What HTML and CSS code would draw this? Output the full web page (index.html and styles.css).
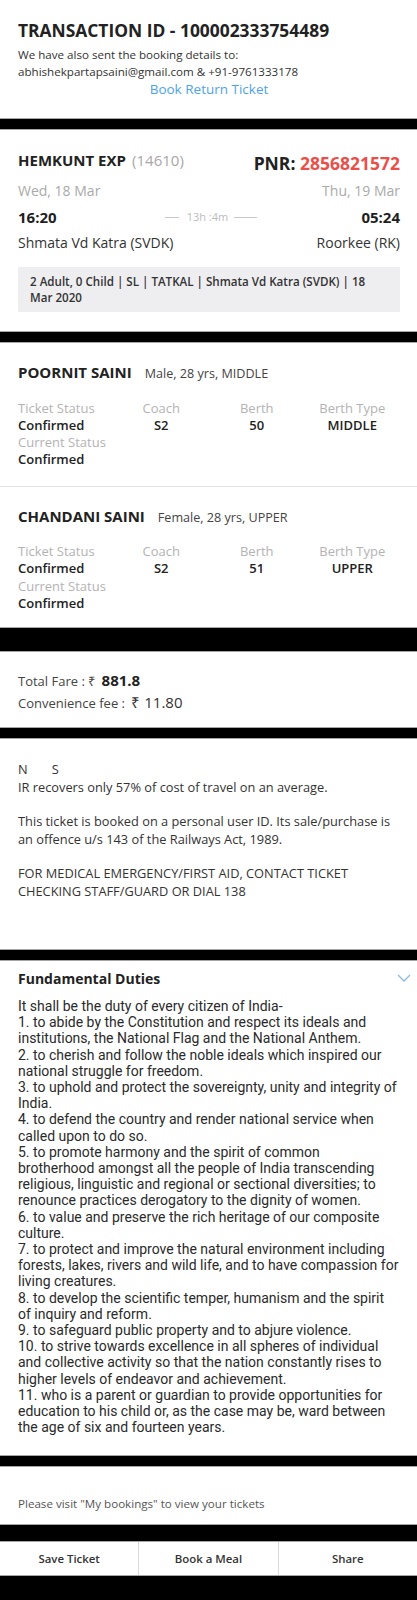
FILE: index.html
```html
<!DOCTYPE html>
<html>
<head>
<meta charset="utf-8">
<link rel="stylesheet" href="styles.css">
</head>
<body>
<div class="page">
  <section class="card head">
    <h1 class="txn">TRANSACTION ID - 100002333754489</h1>
    <p class="sent">We have also sent the booking details to:<br>abhishekpartapsaini@gmail.com &amp; +91-9761333178</p>
    <div class="return"><a class="return-link">Book Return Ticket</a></div>
  </section>

  <section class="card journey">
    <div class="row top">
      <div class="train"><span class="tname">HEMKUNT EXP</span> <span class="tno">(14610)</span></div>
      <div class="pnr">PNR: <span class="pnr-no">2856821572</span></div>
    </div>
    <div class="row dates">
      <span>Wed, 18 Mar</span>
      <span>Thu, 19 Mar</span>
    </div>
    <div class="row times">
      <span class="time">16:20</span>
      <span class="dur"><i class="dash"></i><span class="durt">13h :4m</span><i class="dash"></i></span>
      <span class="time">05:24</span>
    </div>
    <div class="row stations">
      <span>Shmata Vd Katra (SVDK)</span>
      <span>Roorkee (RK)</span>
    </div>
    <div class="summary">2 Adult, 0 Child | SL | TATKAL | Shmata Vd Katra (SVDK) | 18 Mar 2020</div>
  </section>

  <section class="card passengers">
    <div class="pax">
      <div class="pax-name"><b>POORNIT SAINI</b><span class="pax-info">Male, 28 yrs, MIDDLE</span></div>
      <div class="pax-grid">
        <div class="col first"><span class="lbl">Ticket Status</span><span class="val">Confirmed</span><span class="lbl">Current Status</span><span class="val">Confirmed</span></div>
        <div class="col"><span class="lbl">Coach</span><span class="val">S2</span></div>
        <div class="col"><span class="lbl">Berth</span><span class="val">50</span></div>
        <div class="col"><span class="lbl">Berth Type</span><span class="val">MIDDLE</span></div>
      </div>
    </div>
    <div class="pax">
      <div class="pax-name"><b>CHANDANI SAINI</b><span class="pax-info">Female, 28 yrs, UPPER</span></div>
      <div class="pax-grid">
        <div class="col first"><span class="lbl">Ticket Status</span><span class="val">Confirmed</span><span class="lbl">Current Status</span><span class="val">Confirmed</span></div>
        <div class="col"><span class="lbl">Coach</span><span class="val">S2</span></div>
        <div class="col"><span class="lbl">Berth</span><span class="val">51</span></div>
        <div class="col"><span class="lbl">Berth Type</span><span class="val">UPPER</span></div>
      </div>
    </div>
  </section>

  <section class="card fare">
    <div class="fare-line">Total Fare : ₹ <b class="amt">881.8</b></div>
    <div class="fare-line">Convenience fee : <span class="amt2">₹ 11.80</span></div>
  </section>

  <section class="card notes">
    <div class="ns"><span>N</span><span>S</span></div>
    <p>IR recovers only 57% of cost of travel on an average.</p>
    <p>This ticket is booked on a personal user ID. Its sale/purchase is an offence u/s 143 of the Railways Act, 1989.</p>
    <p>FOR MEDICAL EMERGENCY/FIRST AID, CONTACT TICKET CHECKING STAFF/GUARD OR DIAL 138</p>
  </section>

  <section class="card duties">
    <div class="duties-head">
      <h2>Fundamental Duties</h2>
      <svg class="chev" width="14" height="8" viewBox="0 0 14 8"><path d="M1 1 L7 7 L13 1" fill="none" stroke="#8fbbe3" stroke-width="1.4"/></svg>
    </div>
    <p class="duty-text">It shall be the duty of every citizen of India-<br>1. to abide by the Constitution and respect its ideals and<br>institutions, the National Flag and the National Anthem.<br>2. to cherish and follow the noble ideals which inspired our<br>national struggle for freedom.<br>3. to uphold and protect the sovereignty, unity and integrity of<br>India.<br>4. to defend the country and render national service when<br>called upon to do so.<br>5. to promote harmony and the spirit of common<br>brotherhood amongst all the people of India transcending<br>religious, linguistic and regional or sectional diversities; to<br>renounce practices derogatory to the dignity of women.<br>6. to value and preserve the rich heritage of our composite<br>culture.<br>7. to protect and improve the natural environment including<br>forests, lakes, rivers and wild life, and to have compassion for<br>living creatures.<br>8. to develop the scientific temper, humanism and the spirit<br>of inquiry and reform.<br>9. to safeguard public property and to abjure violence.<br>10. to strive towards excellence in all spheres of individual<br>and collective activity so that the nation constantly rises to<br>higher levels of endeavor and achievement.<br>11. who is a parent or guardian to provide opportunities for<br>education to his child or, as the case may be, ward between<br>the age of six and fourteen years.</p>
  </section>

  <section class="card visit">
    <p>Please visit "My bookings" to view your tickets</p>
  </section>

  <nav class="card actions">
    <div class="act">Save Ticket</div>
    <div class="act">Book a Meal</div>
    <div class="act">Share</div>
  </nav>
</div>
</body>
</html>
```

FILE: styles.css
```css
* { box-sizing: border-box; }
html, body { margin: 0; padding: 0; }
body {
  background: #000;
  font-family: "Open Sans", "Liberation Sans", sans-serif;
  color: #333;
  width: 417px;
  height: 1600px;
  overflow: hidden;
}
p { margin: 0; }
.card {
  background: #fff;
  border-top: 1px solid #a6a6a6;
  border-bottom: 1px solid #a6a6a6;
  margin-bottom: 10px;
  padding: 0 17px 0 18px;
}

/* header */
.head { border-top: none; padding-top: 18px; height: 119px; }
.txn { margin: 0; font-size: 17.4px; line-height: 24px; font-weight: 700; color: #222; }
.sent { margin-top: 4px; font-size: 11.6px; line-height: 17px; color: #333; }
.return { text-align: center; font-size: 13.5px; line-height: 19px; }
.return-link { color: #4ea3e6; }

/* journey */
.journey { padding-top: 19px; height: 203px; }
.row { display: flex; justify-content: space-between; align-items: center; }
.row.top { align-items: flex-start; }
.tname { font-size: 15px; line-height: 20px; font-weight: 700; color: #222; }
.tno { font-size: 15px; line-height: 20px; color: #a8a8a8; margin-left: 2px; }
.pnr { font-size: 17.5px; line-height: 24px; font-weight: 700; color: #222; margin-top: 2px; }
.pnr-no { color: #ea4f4a; }
.dates { margin-top: 5px; font-size: 14px; line-height: 22px; color: #aaa; }
.times { margin-top: 4px; font-size: 15px; line-height: 22px; }
.time { font-weight: 700; color: #1f1f1f; }
.dur { display: flex; align-items: center; font-size: 11px; color: #bcbcbc; margin-left: 4px; }
.dash { display: inline-block; height: 1px; background: #c8c8c8; }
.dur .dash:first-child { width: 14px; margin-right: 8px; }
.dur .dash:last-child { width: 23px; margin-left: 6px; }
.stations { margin-top: 4px; font-size: 14px; line-height: 22px; color: #333; }
.summary {
  margin-top: 13px;
  background: #eeeef1;
  padding: 7px 12px 6px 12px;
  font-size: 11.6px;
  line-height: 16px;
  font-weight: 600;
  color: #333;
}

/* passengers */
.passengers { padding: 0; height: 286px; margin-bottom: 23px; }
.pax { padding: 19px 17px 17px 18px; }
.pax + .pax { border-top: 1px solid #e4e4e4; padding-top: 19px; }
.pax-name { font-size: 15px; line-height: 20px; color: #222; display: flex; align-items: baseline; }
.pax-name b { font-weight: 700; }
.pax-info { font-size: 12.6px; color: #444; margin-left: 13px; }
.pax-grid { margin-top: 15.5px; display: grid; grid-template-columns: repeat(4, 1fr); }
.col { display: flex; flex-direction: column; align-items: center; font-size: 13px; line-height: 17.3px; }
.col.first { align-items: flex-start; }
.lbl { color: #b3b3b3; }
.val { font-weight: 600; color: #222; }

/* fare */
.fare { padding-top: 18px; height: 77px; }
.fare-line { font-size: 13px; line-height: 20.5px; color: #444; }
.amt { font-size: 15px; font-weight: 700; color: #222; margin-left: 3px; }
.amt2 { font-size: 15px; color: #333; margin-left: 3px; }

/* notes */
.notes { padding-top: 20.5px; height: 212px; font-size: 12.8px; line-height: 17.5px; color: #333; }
.ns { line-height: 18px; margin-bottom: 1px; }
.ns span + span { margin-left: 24px; }
.notes p + p { margin-top: 17px; }

/* duties */
.duties { padding-top: 7.5px; height: 496px; }
.duties-head { display: flex; justify-content: space-between; align-items: center; margin-right: -11px; }
.duties-head h2 { margin: 0; font-size: 14px; line-height: 20px; font-weight: 700; color: #222; }
.chev { margin-top: -2px; }
.duty-text {
  margin-top: 9.5px;
  font-family: Roboto, "Noto Sans", sans-serif;
  font-size: 14px;
  line-height: 16.2px;
  color: #2a2a2a;
}

/* visit */
.visit { padding-top: 28px; height: 59px; margin-bottom: 16px; }
.visit p { font-size: 11.6px; line-height: 17px; color: #555; }

/* actions */
.actions { display: flex; padding: 0; height: 35px; margin-bottom: 0; }
.act {
  flex: 1;
  display: flex;
  align-items: center;
  justify-content: center;
  font-size: 11.4px;
  font-weight: 600;
  color: #333;
}
.act + .act { border-left: 1px solid #dadada; }
```
